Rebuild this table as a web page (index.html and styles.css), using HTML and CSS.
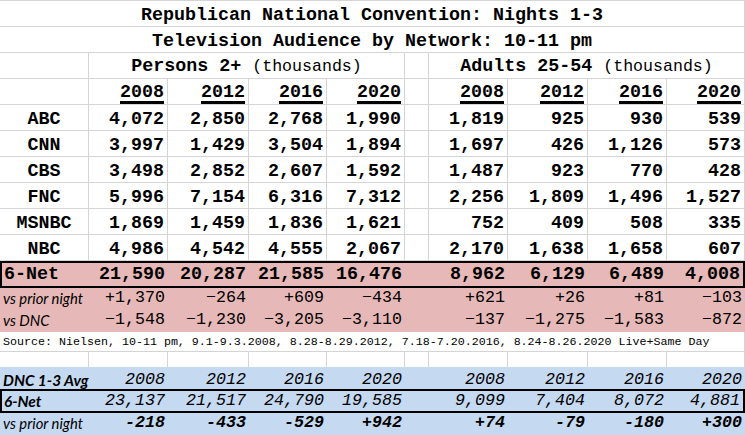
FILE: index.html
```html
<!DOCTYPE html>
<html>
<head>
<meta charset="utf-8">
<title>Republican National Convention: Nights 1-3</title>
<link rel="stylesheet" href="styles.css">
</head>
<body>
<div class="sheet">
  <div class="row white r26">
    <div class="c all b">Republican National Convention: Nights 1-3</div>
  </div>
  <div class="row white r26">
    <div class="c all b">Television Audience by Network: 10-11 pm</div>
  </div>
  <div class="row white r26 group">
    <div class="c"></div>
    <div class="c span4"><span class="hd"><b>Persons 2+</b> <span class="thou">(thousands)</span></span></div>
    <div class="c"></div>
    <div class="c span4"><span class="hd"><b>Adults 25-54</b> <span class="thou">(thousands)</span></span></div>
  </div>
  <div class="row white r26 years b">
    <div class="c"></div>
    <div class="c"><span class="ul">2008</span></div>
    <div class="c"><span class="ul">2012</span></div>
    <div class="c"><span class="ul">2016</span></div>
    <div class="c"><span class="ul">2020</span></div>
    <div class="c"></div>
    <div class="c"><span class="ul">2008</span></div>
    <div class="c"><span class="ul">2012</span></div>
    <div class="c"><span class="ul">2016</span></div>
    <div class="c"><span class="ul">2020</span></div>
  </div>

  <div class="row white r26 b">
    <div class="c mid">ABC</div>
    <div class="c">4,072</div><div class="c">2,850</div><div class="c">2,768</div><div class="c">1,990</div>
    <div class="c"></div>
    <div class="c">1,819</div><div class="c">925</div><div class="c">930</div><div class="c">539</div>
  </div>
  <div class="row white r26 b">
    <div class="c mid">CNN</div>
    <div class="c">3,997</div><div class="c">1,429</div><div class="c">3,504</div><div class="c">1,894</div>
    <div class="c"></div>
    <div class="c">1,697</div><div class="c">426</div><div class="c">1,126</div><div class="c">573</div>
  </div>
  <div class="row white r26 b">
    <div class="c mid">CBS</div>
    <div class="c">3,498</div><div class="c">2,852</div><div class="c">2,607</div><div class="c">1,592</div>
    <div class="c"></div>
    <div class="c">1,487</div><div class="c">923</div><div class="c">770</div><div class="c">428</div>
  </div>
  <div class="row white r26 b">
    <div class="c mid">FNC</div>
    <div class="c">5,996</div><div class="c">7,154</div><div class="c">6,316</div><div class="c">7,312</div>
    <div class="c"></div>
    <div class="c">2,256</div><div class="c">1,809</div><div class="c">1,496</div><div class="c">1,527</div>
  </div>
  <div class="row white r26 b">
    <div class="c mid">MSNBC</div>
    <div class="c">1,869</div><div class="c">1,459</div><div class="c">1,836</div><div class="c">1,621</div>
    <div class="c"></div>
    <div class="c">752</div><div class="c">409</div><div class="c">508</div><div class="c">335</div>
  </div>
  <div class="row white r26 b">
    <div class="c mid">NBC</div>
    <div class="c">4,986</div><div class="c">4,542</div><div class="c">4,555</div><div class="c">2,067</div>
    <div class="c"></div>
    <div class="c">2,170</div><div class="c">1,638</div><div class="c">1,658</div><div class="c">607</div>
  </div>

  <div class="row pink boxed net b">
    <div class="c lead">6-Net</div>
    <div class="c">21,590</div><div class="c">20,287</div><div class="c">21,585</div><div class="c">16,476</div>
    <div class="c"></div>
    <div class="c">8,962</div><div class="c">6,129</div><div class="c">6,489</div><div class="c tail">4,008</div>
  </div>
  <div class="row pink sub">
    <div class="c lbl">vs prior night</div>
    <div class="c">+1,370</div><div class="c">−264</div><div class="c">+609</div><div class="c">−434</div>
    <div class="c"></div>
    <div class="c">+621</div><div class="c">+26</div><div class="c">+81</div><div class="c">−103</div>
  </div>
  <div class="row pink sub">
    <div class="c lbl">vs DNC</div>
    <div class="c">−1,548</div><div class="c">−1,230</div><div class="c">−3,205</div><div class="c">−3,110</div>
    <div class="c"></div>
    <div class="c">−137</div><div class="c">−1,275</div><div class="c">−1,583</div><div class="c">−872</div>
  </div>

  <div class="row white source">
    <div class="c all src">Source: Nielsen, 10-11 pm, 9.1-9.3.2008, 8.28-8.29.2012, 7.18-7.20.2016, 8.24-8.26.2020 Live+Same Day</div>
  </div>
  <div class="row blank">
    <div class="c"></div><div class="c"></div><div class="c"></div><div class="c"></div><div class="c"></div>
    <div class="c"></div><div class="c"></div><div class="c"></div><div class="c"></div><div class="c"></div>
  </div>

  <div class="row blue avg">
    <div class="c lbl strong">DNC 1-3 Avg</div>
    <div class="c">2008</div><div class="c">2012</div><div class="c">2016</div><div class="c">2020</div>
    <div class="c"></div>
    <div class="c">2008</div><div class="c">2012</div><div class="c">2016</div><div class="c">2020</div>
  </div>
  <div class="row blue boxed bnet">
    <div class="c lbl strong lead">6-Net</div>
    <div class="c">23,137</div><div class="c">21,517</div><div class="c">24,790</div><div class="c">19,585</div>
    <div class="c"></div>
    <div class="c">9,099</div><div class="c">7,404</div><div class="c">8,072</div><div class="c tail">4,881</div>
  </div>
  <div class="row blue bprior">
    <div class="c lbl">vs prior night</div>
    <div class="c">-218</div><div class="c">-433</div><div class="c">-529</div><div class="c">+942</div>
    <div class="c"></div>
    <div class="c">+74</div><div class="c">-79</div><div class="c">-180</div><div class="c">+300</div>
  </div>
</div>
</body>
</html>
```

FILE: styles.css
```css
html, body {
  margin: 0;
  padding: 0;
  overflow: hidden;
  background: #ffffff;
}

.sheet {
  width: 745px;
  border-top: 1px solid #d4d4d4;
  font-family: "Liberation Mono", "Courier New", monospace;
  font-size: 18.33px;
  color: #000000;
}

.row {
  display: grid;
  grid-template-columns: 89px 79px 81px 78px 78px 24px 79px 80px 79px 78px;
  box-sizing: border-box;
}

.c {
  display: flex;
  align-items: flex-end;
  justify-content: flex-end;
  padding: 0 3px;
  line-height: 20px;
  white-space: nowrap;
  box-sizing: border-box;
  min-width: 0;
}

.b { font-weight: 700; }

.white { border-bottom: 1px solid #d4d4d4; }
.white .c,
.blank .c { border-right: 1px solid #d4d4d4; }

.r26 { height: 26px; }

.all {
  grid-column: 1 / -1;
  justify-content: center;
}

.span4 {
  grid-column: span 4;
  justify-content: center;
}

.mid { justify-content: center; }

.group .c { padding-bottom: 1px; }

.hd { white-space: pre; }

.thou {
  font-weight: 400;
  font-size: 16.6px;
}

.years .c { line-height: 16px; }

.ul {
  display: inline-block;
  border-bottom: 3px solid #000000;
}

/* pink block */
.pink { background: #e6b8b7; }

.boxed {
  border-top: 2px solid #000000;
  border-bottom: 2px solid #000000;
}

.boxed .lead { border-left: 2px solid #000000; }
.boxed .tail { border-right: 2px solid #000000; }

.net { height: 27px; }
.net .c { padding-bottom: 1px; }
.net .lead { justify-content: flex-start; padding-left: 2px; }

.sub { height: 22px; }
.sub .c {
  font-size: 16.67px;
  padding-bottom: 2px;
}

.lbl {
  justify-content: flex-start;
  font-family: "Lato", "Liberation Sans", sans-serif;
  font-style: italic;
  font-size: 14.8px !important;
  padding-left: 3px;
  overflow: visible;
}

.strong {
  font-weight: 700;
  font-size: 15.4px !important;
}

/* source + spacer */
.source { height: 20px; }
.src {
  justify-content: flex-start;
  font-size: 11.67px;
  line-height: 14px;
  padding-bottom: 2px;
}

.blank { height: 15px; }

/* blue block */
.blue {
  background: #c5d9f1;
  font-style: italic;
}

.blue .c { font-size: 16.67px; }

.avg { height: 22px; }
.avg .c { line-height: 18px; }

.bnet { height: 24px; }
.bnet .lead { padding-left: 2px; }

.bprior { height: 22px; }
.bprior .c {
  font-weight: 700;
  padding-bottom: 2px;
}
.bprior .lbl { font-weight: 400; }
```
